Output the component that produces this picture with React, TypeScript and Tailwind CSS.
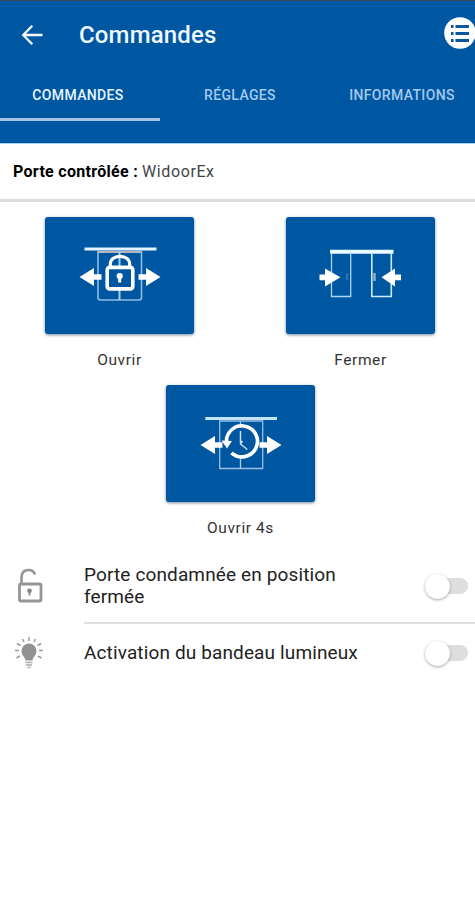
import type { ReactNode } from "react";

const Arrows = () => (
  <path
    d="M34.500 60 49 51v6.300h7.500v5.400H49V69zM115.500 60 101 51v6.300h-7.500v5.400h7.500V69z"
    fill="#fff"
  />
);

const LockDoor = () => (
  <svg viewBox="0 0 149 117" className="h-full w-full" fill="none">
    <path d="M39.500 32h72" stroke="#e4f3ff" strokeWidth="3" />
    <path d="M53 34.500v46q0 2.500 2.500 2.500h38.500q2.500 0 2.500-2.500v-46z" stroke="#8fbbe5" strokeWidth="1.600" />
    <path d="M52.500 35h44" stroke="#b3b7bd" strokeWidth="2" />
    <path d="M74.500 34v49" stroke="#a9ccec" strokeWidth="2" />
    <rect x="62.200" y="50.400" width="25.600" height="21.500" rx="2.500" fill="#0057a1" stroke="#fff" strokeWidth="3.600" />
    <path d="M65.300 50v-2.500c0-5 4-8.200 9.700-8.200s9.700 3.200 9.700 8.200V50" stroke="#fff" strokeWidth="3.200" />
    <circle cx="74.700" cy="59" r="3.100" fill="#fff" />
    <path d="M74.700 59.500v6" stroke="#fff" strokeWidth="3" />
    <Arrows />
  </svg>
);

const CloseDoor = () => (
  <svg viewBox="0 0 149 117" className="h-full w-full" fill="none">
    <path d="M44 34.700h63.500" stroke="#e8fbff" strokeWidth="4" />
    <path d="M45.500 36v43.500H64.700V36" stroke="#a9d5f3" strokeWidth="1.300" />
    <path d="M85.800 36v43.500h19.500V36" stroke="#c9ecff" strokeWidth="1.600" />
    <path d="M61 56v7" stroke="#5f91c2" />
    <path d="M88.500 56v8" stroke="#93b4d5" strokeWidth="2.400" />
    <path d="M54.500 60.300 39 51.500v6h-5.500v5.800H39v6.200zM95.500 60.300l13.500-8.800v6h6v5.800h-6v6.200z" fill="#fff" />
  </svg>
);

const TimedDoor = () => (
  <svg viewBox="0 0 149 117" className="h-full w-full" fill="none">
    <path d="M39.300 33.500h71.700" stroke="#c3e5fa" strokeWidth="3.200" />
    <path d="M53.700 36v47.500h43V36z" stroke="#9cbde2" strokeWidth="1.300" />
    <path d="M74.500 36v47.500" stroke="#a9ccec" strokeWidth="1.300" />
    <circle cx="75" cy="56.500" r="14" fill="#0057a1" />
    <path d="M60.500 57.500A15.500 15.500 0 1 1 65.500 67.800" stroke="#fff" strokeWidth="3.600" />
    <path d="M55.500 55.500 66 56l-5 7.500z" fill="#fff" />
    <path d="M74.500 46v13l6.800 5.500M74.500 59l2-3" stroke="#c5dff4" strokeWidth="1.500" />
    <Arrows />
  </svg>
);

const CommandTile = ({ label, children }: { label: string; children: ReactNode }) => (
  <button className="flex w-[149px] flex-col items-center">
    <span className="block h-[117px] w-full rounded-[3px] bg-[#0057a1] shadow-[0_1px_3px_rgba(0,35,80,0.55)]">
      {children}
    </span>
    <span className="mt-4 text-[15.500px] leading-5 tracking-[0.600px] text-[#333]">{label}</span>
  </button>
);

const Toggle = () => (
  <span className="flex h-[26px] w-[43px] shrink-0 items-center">
    <span className="flex h-4 w-full items-center rounded-full bg-[#dedede]">
      <span className="h-[25px] w-[25px] shrink-0 rounded-full bg-white shadow-[0_1px_3px_rgba(0,0,0,0.35)]" />
    </span>
  </span>
);

const OpenLock = () => (
  <svg viewBox="0 0 26 36" className="h-9 w-[26px]" fill="none" stroke="#959595">
    <rect x="2.500" y="17" width="21.500" height="17" rx="1.500" strokeWidth="2.800" />
    <path d="M4.500 16V11C4.500 5.500 7 3 11.500 3c3.500 0 5.500 1.500 6.500 4.500" strokeWidth="2.600" />
    <circle cx="12.500" cy="23.800" r="2.300" fill="#858585" stroke="none" />
    <path d="M12.500 24v4.500" stroke="#858585" strokeWidth="1.800" />
  </svg>
);

const Bulb = () => (
  <svg viewBox="0 0 30 34" className="h-[34px] w-[30px]" fill="none" stroke="#999" strokeWidth="1.500">
    <path d="M15 7.500a7.500 7.500 0 0 0-7.500 7.500c0 4.500 3.500 5.500 4 9.500h7c.5-4 4-5 4-9.500a7.500 7.500 0 0 0-7.500-7.500z" fill="#929292" stroke="none" />
    <path d="M11.500 26.500h7M12 29h6M13.500 31.500h3" stroke="#aaa" strokeWidth="1.500" />
    <path d="M15 1v4M8.500 3 10 6M21.500 3 20 6M3 7.500l3.500 2M27 7.500l-3.500 2M1 14.500h4M25 14.500h4M2.500 22l3.500-2M27.500 22 24 20" />
  </svg>
);

export default function App() {
  return (
    <div className="h-[900px] w-[475px] overflow-hidden bg-white font-[Roboto,sans-serif] text-[#222]">
      <header className="flex h-[143px] flex-col border-t border-[#3d4a56] bg-[#0057a1]">
        <div className="flex h-[67px] shrink-0 items-center pl-[21px]">
          <svg viewBox="0 0 22 22" className="h-[22px] w-[22px] shrink-0" fill="none" stroke="#f1faff" strokeWidth="2.300">
            <path d="M21.500 11H2.500M11.300 1.700 2.200 11l9.100 9.300" />
          </svg>
          <h1 className="ml-[36px] text-2xl font-medium tracking-[0.150px] text-[#edf8ff]">Commandes</h1>
          <svg viewBox="0 0 32 32" className="ml-auto -mr-px mb-[3px] h-8 w-8 shrink-0">
            <circle cx="16" cy="16" r="15.800" fill="#fff" />
            <path d="M7 9.500h2.500M11.500 9.500H25M7 16.500h2.500M11.500 16.500H25M7 23.500h2.500M11.500 23.500H25" stroke="#0a57a0" strokeWidth="3" />
          </svg>
        </div>
        <nav className="flex h-[53px] w-[484px] shrink-0 text-[14px] font-medium tracking-[0.350px] text-[#a3c9ed]">
          <span className="flex w-40 items-center justify-center border-b-[3px] border-[#a9c2e4] pr-1 pt-1 text-[#e8f5ff]">COMMANDES</span>
          <span className="flex w-40 items-center justify-center border-b-[3px] border-transparent pt-1">RÉGLAGES</span>
          <span className="flex w-[164px] items-center justify-center border-b-[3px] border-transparent pt-1">INFORMATIONS</span>
        </nav>
      </header>
      <div className="flex h-[59px] items-center border-t border-b-[3px] border-t-[#a5d5f3] border-b-[#dcdcdc] pl-[13px] pt-px text-[16px] text-[#444]">
        <strong className="mr-1 font-bold tracking-[0.300px] text-black">Porte contrôlée :</strong> <span className="tracking-[0.600px]">WidoorEx</span>
      </div>
      <main>
        <div className="flex gap-[92px] pt-[15px] pl-[45px]">
          <CommandTile label="Ouvrir"><LockDoor /></CommandTile>
          <CommandTile label="Fermer"><CloseDoor /></CommandTile>
        </div>
        <div className="flex justify-center pt-[15px] pl-[6px]">
          <CommandTile label="Ouvrir 4s"><TimedDoor /></CommandTile>
        </div>
        <div className="mt-[11px] flex h-[75px] pl-[17px]">
          <span className="mt-[18px] w-[67px]"><OpenLock /></span>
          <div className="flex flex-1 justify-between border-b-2 border-[#dfdfdf] pr-[7px]">
            <p className="mt-[15px] w-[280px] text-[19px] leading-[22px] tracking-[0.130px]">Porte condamnée en position fermée</p>
            <span className="mt-[24px]"><Toggle /></span>
          </div>
        </div>
        <div className="flex h-[58px] items-center pr-[7px] pl-[14px]">
          <span className="w-[70px]"><Bulb /></span>
          <p className="flex-1 text-[19px] leading-[22px] tracking-[0.130px]">Activation du bandeau lumineux</p>
          <Toggle />
        </div>
      </main>
    </div>
  );
}
